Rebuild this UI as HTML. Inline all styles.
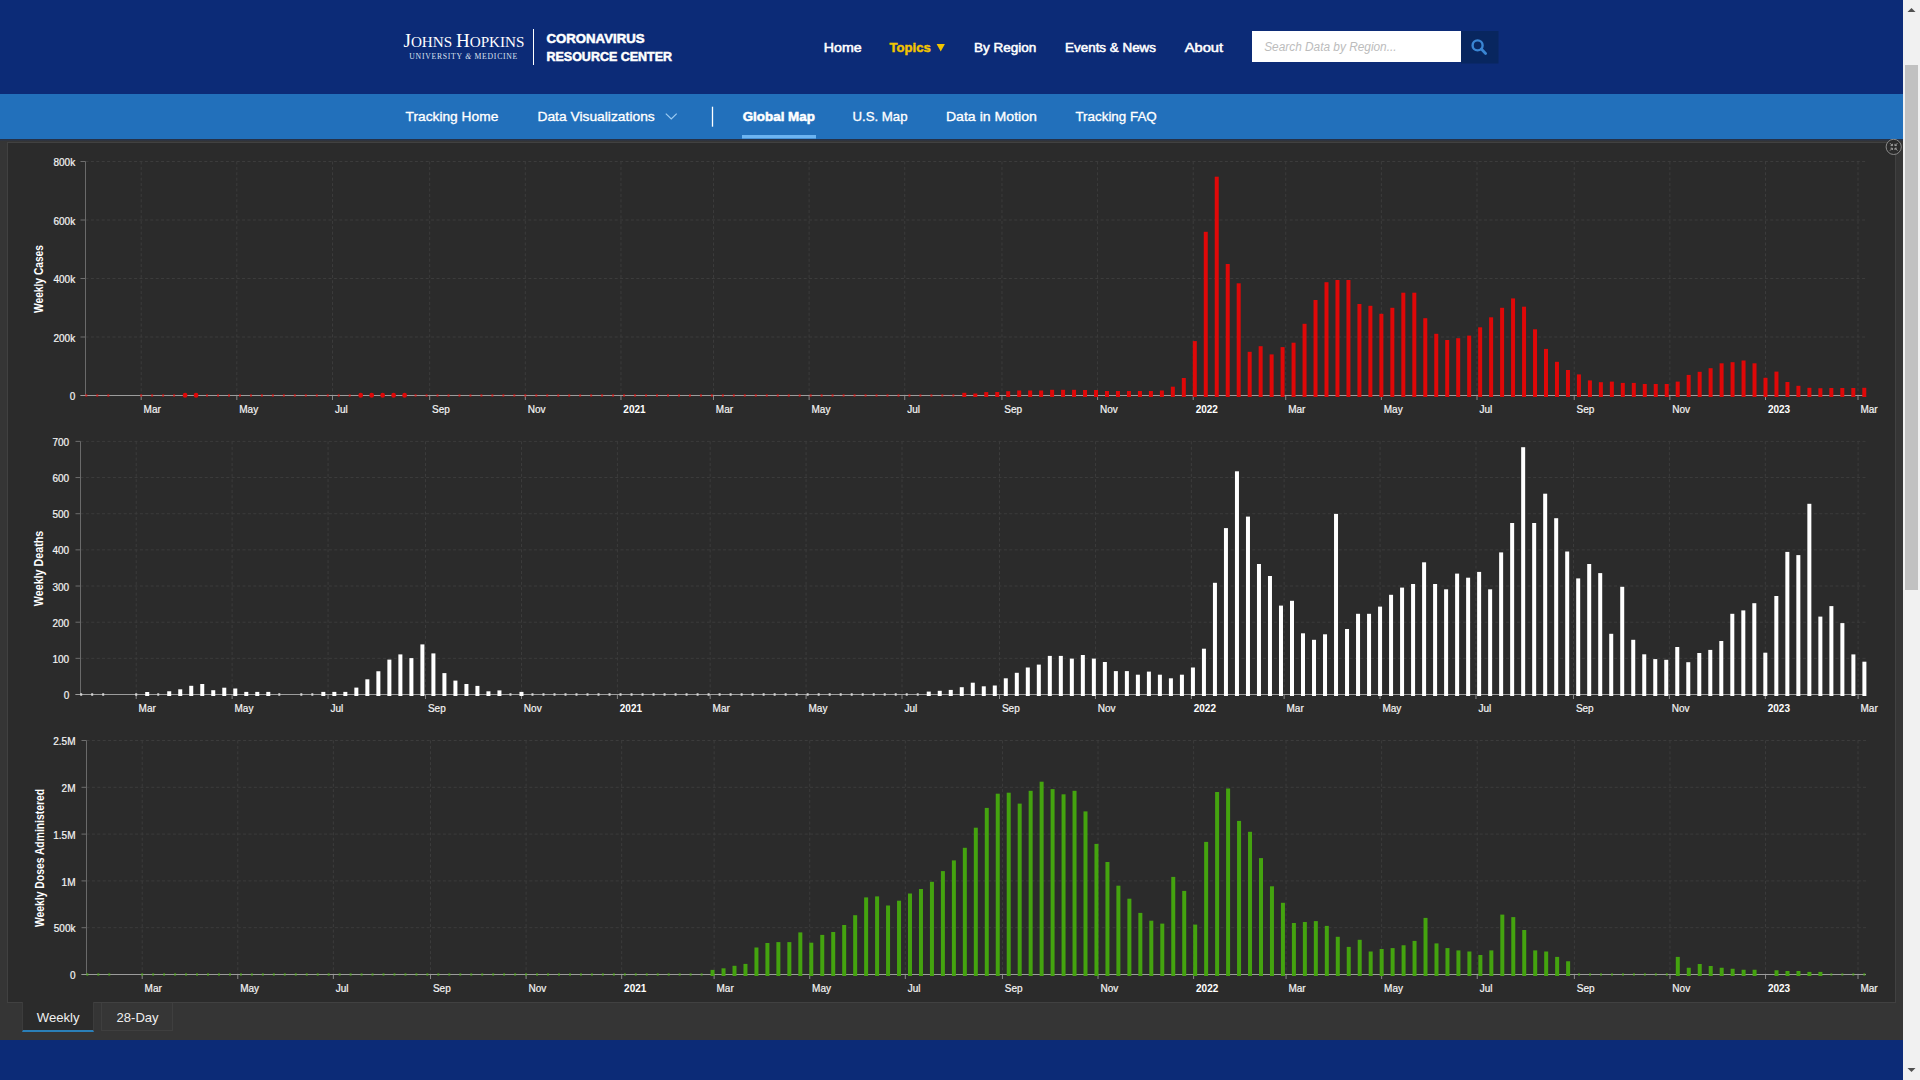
<!DOCTYPE html>
<html><head><meta charset="utf-8"><title>Johns Hopkins Coronavirus Resource Center</title>
<style>
html,body{margin:0;padding:0;width:1920px;height:1080px;overflow:hidden;background:#353535;font-family:"Liberation Sans",sans-serif;}
.blk{position:absolute;}
#hdr{left:0;top:0;width:1903px;height:94px;background:#0c2b77;}
#nav{left:0;top:94px;width:1903px;height:45px;background:#2270bb;}
#shadow{left:0;top:139px;width:1903px;height:2px;background:linear-gradient(#20304d,#34363b);}
#main{left:0;top:141px;width:1903px;height:899px;background:#353535;}
#panel{left:7px;top:142px;width:1887px;height:859px;background:#2b2b2b;border:1px solid #414141;}
#foot{left:0;top:1040px;width:1903px;height:40px;background:#0c2b77;}
#sb{left:1903px;top:0;width:17px;height:1080px;background:#f1f1f1;}
#thumb{left:1905px;top:65px;width:13px;height:525px;background:#c1c1c1;}
#tab1{left:22px;top:1002px;width:70px;height:28px;background:#2b2b2b;border-left:1px solid #3c3c3c;border-right:1px solid #3c3c3c;border-bottom:2px solid #2a7fb8;}
#tab2{left:101px;top:1003px;width:70px;height:27px;background:#363636;border:1px solid #3f3f3f;border-top:none;}
svg{position:absolute;left:0;top:0;}
.grid{stroke:#3c3c3c;stroke-width:1;stroke-dasharray:3 2.4;}
.tick{stroke:#6e6e6e;stroke-width:1;}
.xtick{stroke:#8a8a8a;stroke-width:1;}
.yaxis{stroke:#6a6a6a;stroke-width:1;}
.xaxis{stroke:#9c9c9c;stroke-width:1;}
.yl{font-family:"Liberation Sans",sans-serif;font-size:10px;fill:#f4f4f4;stroke:#f4f4f4;stroke-width:0.2;text-anchor:end;}
.xl{font-family:"Liberation Sans",sans-serif;font-size:10px;fill:#f4f4f4;stroke:#f4f4f4;stroke-width:0.2;}
.xlb{font-family:"Liberation Sans",sans-serif;font-size:10px;font-weight:bold;fill:#ffffff;}
.ttl{font-family:"Liberation Sans",sans-serif;font-size:12px;font-weight:bold;fill:#ffffff;text-anchor:middle;}
.nv{font-family:"Liberation Sans",sans-serif;font-size:12.5px;font-weight:bold;fill:#ffffff;}
.nvm{font-family:"Liberation Sans",sans-serif;font-size:12.5px;fill:#ffffff;stroke:#ffffff;stroke-width:0.5;}
.nv2{font-family:"Liberation Sans",sans-serif;font-size:12.5px;fill:#ffffff;stroke:#ffffff;stroke-width:0.3;}
</style></head>
<body>
<div class="blk" id="hdr"></div>
<div class="blk" id="nav"></div>
<div class="blk" id="shadow"></div>
<div class="blk" id="main"></div>
<div class="blk" id="panel"></div>
<div class="blk" id="foot"></div>
<div class="blk" id="tab1"></div>
<div class="blk" id="tab2"></div>
<div class="blk" id="sb"></div>
<div class="blk" id="thumb"></div>
<svg width="1920" height="1080" viewBox="0 0 1920 1080">
<!-- logo -->
<text x="403.5" y="47" font-family="Liberation Serif" fill="#ffffff" textLength="121" lengthAdjust="spacingAndGlyphs"><tspan font-size="19.5">J</tspan><tspan font-size="15.5">OHNS </tspan><tspan font-size="19.5">H</tspan><tspan font-size="15.5">OPKINS</tspan></text>
<text x="409.3" y="59.4" font-family="Liberation Serif" font-size="7.7" fill="#dfe5f2" textLength="108" lengthAdjust="spacing">UNIVERSITY <tspan font-style="italic">&amp;</tspan> MEDICINE</text>
<line x1="533.5" y1="29" x2="533.5" y2="65" stroke="#ffffff" stroke-width="1"/>
<text x="546.5" y="43.3" font-family="Liberation Sans" font-weight="bold" font-size="12" fill="#fff" stroke="#fff" stroke-width="0.5" textLength="98" lengthAdjust="spacingAndGlyphs">CORONAVIRUS</text>
<text x="546.5" y="61.3" font-family="Liberation Sans" font-weight="bold" font-size="12" fill="#fff" stroke="#fff" stroke-width="0.5" textLength="125.5" lengthAdjust="spacingAndGlyphs">RESOURCE CENTER</text>
<!-- top nav -->
<text x="823.8" y="51.9" class="nvm" textLength="37.8" lengthAdjust="spacingAndGlyphs">Home</text>
<text x="889.6" y="51.9" class="nv" style="fill:#f1c400;stroke:#f1c400;stroke-width:0.45" textLength="41.2" lengthAdjust="spacingAndGlyphs">Topics</text>
<path d="M936.6 44 L944.9 44 L940.75 51.4 Z" fill="#f1c400"/>
<text x="974" y="51.9" class="nvm" textLength="62.4" lengthAdjust="spacingAndGlyphs">By Region</text>
<text x="1065.1" y="51.9" class="nvm" textLength="90.9" lengthAdjust="spacingAndGlyphs">Events &amp; News</text>
<text x="1184.7" y="51.9" class="nvm" textLength="38.4" lengthAdjust="spacingAndGlyphs">About</text>
<!-- search -->
<rect x="1252" y="31" width="209" height="31" fill="#ffffff"/>
<rect x="1461" y="31" width="37.5" height="32.5" fill="#08265f"/>
<text x="1264.2" y="51" font-family="Liberation Sans" font-style="italic" font-size="12" fill="#bcbcbc" textLength="132.4" lengthAdjust="spacingAndGlyphs">Search Data by Region...</text>
<circle cx="1477.6" cy="45.4" r="5" fill="none" stroke="#3a86d4" stroke-width="2.4"/>
<line x1="1481.3" y1="49.1" x2="1485.6" y2="53.4" stroke="#3a86d4" stroke-width="2.8" stroke-linecap="round"/>
<!-- second nav -->
<text x="405.5" y="120.7" class="nv2" textLength="92.8" lengthAdjust="spacingAndGlyphs">Tracking Home</text>
<text x="537.4" y="120.7" class="nv2" textLength="117.4" lengthAdjust="spacingAndGlyphs">Data Visualizations</text>
<path d="M665.8 113.6 L671.25 119 L676.7 113.6" fill="none" stroke="#9ccbf2" stroke-width="1.2"/>
<line x1="712.5" y1="106.7" x2="712.5" y2="126.7" stroke="#ffffff" stroke-width="1.3"/>
<text x="742.7" y="120.7" class="nv" style="stroke:#fff;stroke-width:0.5" textLength="72.2" lengthAdjust="spacingAndGlyphs">Global Map</text>
<rect x="742" y="135" width="74" height="3.5" fill="#6cb4f2"/>
<text x="852.4" y="120.7" class="nv2" textLength="55.2" lengthAdjust="spacingAndGlyphs">U.S. Map</text>
<text x="945.9" y="120.7" class="nv2" textLength="91.1" lengthAdjust="spacingAndGlyphs">Data in Motion</text>
<text x="1075.4" y="120.7" class="nv2" textLength="81.4" lengthAdjust="spacingAndGlyphs">Tracking FAQ</text>
<!-- charts -->
<line x1="80.5" y1="395.5" x2="85.5" y2="395.5" class="tick"/>
<text x="75.2" y="400.1" class="yl">0</text>
<line x1="85.5" y1="337" x2="1866" y2="337" class="grid"/>
<line x1="80.5" y1="337" x2="85.5" y2="337" class="tick"/>
<text x="75.2" y="341.6" class="yl">200k</text>
<line x1="85.5" y1="278.5" x2="1866" y2="278.5" class="grid"/>
<line x1="80.5" y1="278.5" x2="85.5" y2="278.5" class="tick"/>
<text x="75.2" y="283.1" class="yl">400k</text>
<line x1="85.5" y1="220" x2="1866" y2="220" class="grid"/>
<line x1="80.5" y1="220" x2="85.5" y2="220" class="tick"/>
<text x="75.2" y="224.6" class="yl">600k</text>
<line x1="85.5" y1="161.5" x2="1866" y2="161.5" class="grid"/>
<line x1="80.5" y1="161.5" x2="85.5" y2="161.5" class="tick"/>
<text x="75.2" y="166.1" class="yl">800k</text>
<line x1="141.2" y1="161.5" x2="141.2" y2="395.5" class="grid"/>
<line x1="141.2" y1="395.5" x2="141.2" y2="400" class="xtick"/>
<text x="143.6" y="413.1" class="xl">Mar</text>
<line x1="236.84" y1="161.5" x2="236.84" y2="395.5" class="grid"/>
<line x1="236.84" y1="395.5" x2="236.84" y2="400" class="xtick"/>
<text x="239.24" y="413.1" class="xl">May</text>
<line x1="332.48" y1="161.5" x2="332.48" y2="395.5" class="grid"/>
<line x1="332.48" y1="395.5" x2="332.48" y2="400" class="xtick"/>
<text x="334.88" y="413.1" class="xl">Jul</text>
<line x1="429.69" y1="161.5" x2="429.69" y2="395.5" class="grid"/>
<line x1="429.69" y1="395.5" x2="429.69" y2="400" class="xtick"/>
<text x="432.09" y="413.1" class="xl">Sep</text>
<line x1="525.32" y1="161.5" x2="525.32" y2="395.5" class="grid"/>
<line x1="525.32" y1="395.5" x2="525.32" y2="400" class="xtick"/>
<text x="527.72" y="413.1" class="xl">Nov</text>
<line x1="620.96" y1="161.5" x2="620.96" y2="395.5" class="grid"/>
<line x1="620.96" y1="395.5" x2="620.96" y2="400" class="xtick"/>
<text x="623.36" y="413.1" class="xlb">2021</text>
<line x1="713.47" y1="161.5" x2="713.47" y2="395.5" class="grid"/>
<line x1="713.47" y1="395.5" x2="713.47" y2="400" class="xtick"/>
<text x="715.87" y="413.1" class="xl">Mar</text>
<line x1="809.11" y1="161.5" x2="809.11" y2="395.5" class="grid"/>
<line x1="809.11" y1="395.5" x2="809.11" y2="400" class="xtick"/>
<text x="811.51" y="413.1" class="xl">May</text>
<line x1="904.74" y1="161.5" x2="904.74" y2="395.5" class="grid"/>
<line x1="904.74" y1="395.5" x2="904.74" y2="400" class="xtick"/>
<text x="907.14" y="413.1" class="xl">Jul</text>
<line x1="1001.95" y1="161.5" x2="1001.95" y2="395.5" class="grid"/>
<line x1="1001.95" y1="395.5" x2="1001.95" y2="400" class="xtick"/>
<text x="1004.35" y="413.1" class="xl">Sep</text>
<line x1="1097.59" y1="161.5" x2="1097.59" y2="395.5" class="grid"/>
<line x1="1097.59" y1="395.5" x2="1097.59" y2="400" class="xtick"/>
<text x="1099.99" y="413.1" class="xl">Nov</text>
<line x1="1193.23" y1="161.5" x2="1193.23" y2="395.5" class="grid"/>
<line x1="1193.23" y1="395.5" x2="1193.23" y2="400" class="xtick"/>
<text x="1195.63" y="413.1" class="xlb">2022</text>
<line x1="1285.73" y1="161.5" x2="1285.73" y2="395.5" class="grid"/>
<line x1="1285.73" y1="395.5" x2="1285.73" y2="400" class="xtick"/>
<text x="1288.13" y="413.1" class="xl">Mar</text>
<line x1="1381.37" y1="161.5" x2="1381.37" y2="395.5" class="grid"/>
<line x1="1381.37" y1="395.5" x2="1381.37" y2="400" class="xtick"/>
<text x="1383.77" y="413.1" class="xl">May</text>
<line x1="1477.01" y1="161.5" x2="1477.01" y2="395.5" class="grid"/>
<line x1="1477.01" y1="395.5" x2="1477.01" y2="400" class="xtick"/>
<text x="1479.41" y="413.1" class="xl">Jul</text>
<line x1="1574.22" y1="161.5" x2="1574.22" y2="395.5" class="grid"/>
<line x1="1574.22" y1="395.5" x2="1574.22" y2="400" class="xtick"/>
<text x="1576.62" y="413.1" class="xl">Sep</text>
<line x1="1669.86" y1="161.5" x2="1669.86" y2="395.5" class="grid"/>
<line x1="1669.86" y1="395.5" x2="1669.86" y2="400" class="xtick"/>
<text x="1672.26" y="413.1" class="xl">Nov</text>
<line x1="1765.5" y1="161.5" x2="1765.5" y2="395.5" class="grid"/>
<line x1="1765.5" y1="395.5" x2="1765.5" y2="400" class="xtick"/>
<text x="1767.9" y="413.1" class="xlb">2023</text>
<line x1="1858" y1="161.5" x2="1858" y2="395.5" class="grid"/>
<line x1="1858" y1="395.5" x2="1858" y2="400" class="xtick"/>
<text x="1860.4" y="413.1" class="xl">Mar</text>
<line x1="85.5" y1="161.5" x2="85.5" y2="395.5" class="yaxis"/>
<line x1="80.5" y1="395.5" x2="1866" y2="395.5" class="xaxis"/>
<text transform="translate(42.7 279) rotate(-90)" class="ttl" textLength="68" lengthAdjust="spacingAndGlyphs">Weekly Cases</text>
<rect x="85.33" y="394" width="2" height="3" fill="#e00808" opacity="0.6"/>
<rect x="96.3" y="394" width="2" height="3" fill="#e00808" opacity="0.6"/>
<rect x="107.28" y="394" width="2" height="3" fill="#e00808" opacity="0.6"/>
<rect x="140.2" y="394" width="2" height="3" fill="#e00808" opacity="0.6"/>
<rect x="151.17" y="394" width="2" height="3" fill="#e00808" opacity="0.6"/>
<rect x="162.15" y="394" width="2" height="3" fill="#e00808" opacity="0.6"/>
<rect x="173.12" y="394" width="2" height="3" fill="#e00808" opacity="0.6"/>
<rect x="182.8" y="392.8" width="4.6" height="5" rx="2.3" fill="#e00808"/>
<rect x="193.77" y="392.8" width="4.6" height="5" rx="2.3" fill="#e00808"/>
<rect x="206.05" y="394" width="2" height="3" fill="#e00808" opacity="0.6"/>
<rect x="217.02" y="394" width="2" height="3" fill="#e00808" opacity="0.6"/>
<rect x="228" y="394" width="2" height="3" fill="#e00808" opacity="0.6"/>
<rect x="238.97" y="394" width="2" height="3" fill="#e00808" opacity="0.6"/>
<rect x="249.95" y="394" width="2" height="3" fill="#e00808" opacity="0.6"/>
<rect x="260.92" y="394" width="2" height="3" fill="#e00808" opacity="0.6"/>
<rect x="271.9" y="394" width="2" height="3" fill="#e00808" opacity="0.6"/>
<rect x="282.87" y="394" width="2" height="3" fill="#e00808" opacity="0.6"/>
<rect x="293.85" y="394" width="2" height="3" fill="#e00808" opacity="0.6"/>
<rect x="304.82" y="394" width="2" height="3" fill="#e00808" opacity="0.6"/>
<rect x="315.8" y="394" width="2" height="3" fill="#e00808" opacity="0.6"/>
<rect x="326.77" y="394" width="2" height="3" fill="#e00808" opacity="0.6"/>
<rect x="337.75" y="394" width="2" height="3" fill="#e00808" opacity="0.6"/>
<rect x="348.72" y="394" width="2" height="3" fill="#e00808" opacity="0.6"/>
<rect x="358.4" y="392.8" width="4.6" height="5" rx="2.3" fill="#e00808"/>
<rect x="369.37" y="392.8" width="4.6" height="5" rx="2.3" fill="#e00808"/>
<rect x="380.35" y="392.8" width="4.6" height="5" rx="2.3" fill="#e00808"/>
<rect x="391.32" y="392.8" width="4.6" height="5" rx="2.3" fill="#e00808"/>
<rect x="402.3" y="392.8" width="4.6" height="5" rx="2.3" fill="#e00808"/>
<rect x="414.57" y="394" width="2" height="3" fill="#e00808" opacity="0.6"/>
<rect x="425.55" y="394" width="2" height="3" fill="#e00808" opacity="0.6"/>
<rect x="436.52" y="394" width="2" height="3" fill="#e00808" opacity="0.6"/>
<rect x="447.5" y="394" width="2" height="3" fill="#e00808" opacity="0.6"/>
<rect x="458.47" y="394" width="2" height="3" fill="#e00808" opacity="0.6"/>
<rect x="469.45" y="394" width="2" height="3" fill="#e00808" opacity="0.6"/>
<rect x="480.42" y="394" width="2" height="3" fill="#e00808" opacity="0.6"/>
<rect x="491.4" y="394" width="2" height="3" fill="#e00808" opacity="0.6"/>
<rect x="502.37" y="394" width="2" height="3" fill="#e00808" opacity="0.6"/>
<rect x="513.35" y="394" width="2" height="3" fill="#e00808" opacity="0.6"/>
<rect x="524.32" y="394" width="2" height="3" fill="#e00808" opacity="0.6"/>
<rect x="535.3" y="394" width="2" height="3" fill="#e00808" opacity="0.6"/>
<rect x="546.27" y="394" width="2" height="3" fill="#e00808" opacity="0.6"/>
<rect x="557.25" y="394" width="2" height="3" fill="#e00808" opacity="0.6"/>
<rect x="568.22" y="394" width="2" height="3" fill="#e00808" opacity="0.6"/>
<rect x="579.2" y="394" width="2" height="3" fill="#e00808" opacity="0.6"/>
<rect x="590.17" y="394" width="2" height="3" fill="#e00808" opacity="0.6"/>
<rect x="601.15" y="394" width="2" height="3" fill="#e00808" opacity="0.6"/>
<rect x="612.12" y="394" width="2" height="3" fill="#e00808" opacity="0.6"/>
<rect x="623.1" y="394" width="2" height="3" fill="#e00808" opacity="0.6"/>
<rect x="634.07" y="394" width="2" height="3" fill="#e00808" opacity="0.6"/>
<rect x="645.05" y="394" width="2" height="3" fill="#e00808" opacity="0.6"/>
<rect x="656.02" y="394" width="2" height="3" fill="#e00808" opacity="0.6"/>
<rect x="667" y="394" width="2" height="3" fill="#e00808" opacity="0.6"/>
<rect x="677.97" y="394" width="2" height="3" fill="#e00808" opacity="0.6"/>
<rect x="688.95" y="394" width="2" height="3" fill="#e00808" opacity="0.6"/>
<rect x="699.92" y="394" width="2" height="3" fill="#e00808" opacity="0.6"/>
<rect x="710.9" y="394" width="2" height="3" fill="#e00808" opacity="0.6"/>
<rect x="721.87" y="394" width="2" height="3" fill="#e00808" opacity="0.6"/>
<rect x="732.85" y="394" width="2" height="3" fill="#e00808" opacity="0.6"/>
<rect x="743.82" y="394" width="2" height="3" fill="#e00808" opacity="0.6"/>
<rect x="754.8" y="394" width="2" height="3" fill="#e00808" opacity="0.6"/>
<rect x="765.77" y="394" width="2" height="3" fill="#e00808" opacity="0.6"/>
<rect x="776.75" y="394" width="2" height="3" fill="#e00808" opacity="0.6"/>
<rect x="787.72" y="394" width="2" height="3" fill="#e00808" opacity="0.6"/>
<rect x="798.7" y="394" width="2" height="3" fill="#e00808" opacity="0.6"/>
<rect x="809.67" y="394" width="2" height="3" fill="#e00808" opacity="0.6"/>
<rect x="820.65" y="394" width="2" height="3" fill="#e00808" opacity="0.6"/>
<rect x="831.62" y="394" width="2" height="3" fill="#e00808" opacity="0.6"/>
<rect x="842.6" y="394" width="2" height="3" fill="#e00808" opacity="0.6"/>
<rect x="853.57" y="394" width="2" height="3" fill="#e00808" opacity="0.6"/>
<rect x="864.55" y="394" width="2" height="3" fill="#e00808" opacity="0.6"/>
<rect x="875.52" y="394" width="2" height="3" fill="#e00808" opacity="0.6"/>
<rect x="886.5" y="394" width="2" height="3" fill="#e00808" opacity="0.6"/>
<rect x="897.47" y="394" width="2" height="3" fill="#e00808" opacity="0.6"/>
<rect x="908.45" y="394" width="2" height="3" fill="#e00808" opacity="0.6"/>
<rect x="919.42" y="394" width="2" height="3" fill="#e00808" opacity="0.6"/>
<rect x="930.4" y="394" width="2" height="3" fill="#e00808" opacity="0.6"/>
<rect x="941.37" y="394" width="2" height="3" fill="#e00808" opacity="0.6"/>
<rect x="952.35" y="394" width="2" height="3" fill="#e00808" opacity="0.6"/>
<rect x="962.32" y="392.8" width="4" height="4.2" fill="#e00808"/>
<rect x="973.3" y="393.5" width="4" height="3.5" fill="#e00808"/>
<rect x="984.27" y="392.1" width="4" height="4.9" fill="#e00808"/>
<rect x="995.25" y="392" width="4" height="5" fill="#e00808"/>
<rect x="1006.22" y="391.2" width="4" height="5.8" fill="#e00808"/>
<rect x="1017.2" y="390.5" width="4" height="6.5" fill="#e00808"/>
<rect x="1028.17" y="390.5" width="4" height="6.5" fill="#e00808"/>
<rect x="1039.15" y="390.5" width="4" height="6.5" fill="#e00808"/>
<rect x="1050.12" y="389.8" width="4" height="7.2" fill="#e00808"/>
<rect x="1061.1" y="389.8" width="4" height="7.2" fill="#e00808"/>
<rect x="1072.07" y="389.8" width="4" height="7.2" fill="#e00808"/>
<rect x="1083.05" y="390" width="4" height="7" fill="#e00808"/>
<rect x="1094.02" y="390" width="4" height="7" fill="#e00808"/>
<rect x="1105" y="391" width="4" height="6" fill="#e00808"/>
<rect x="1115.97" y="391" width="4" height="6" fill="#e00808"/>
<rect x="1126.95" y="391" width="4" height="6" fill="#e00808"/>
<rect x="1137.92" y="391" width="4" height="6" fill="#e00808"/>
<rect x="1148.9" y="391" width="4" height="6" fill="#e00808"/>
<rect x="1159.87" y="390.5" width="4" height="6.5" fill="#e00808"/>
<rect x="1170.85" y="386.7" width="4" height="10.3" fill="#e00808"/>
<rect x="1181.82" y="378" width="4" height="19" fill="#e00808"/>
<rect x="1192.8" y="341.1" width="4" height="55.9" fill="#e00808"/>
<rect x="1203.77" y="231.8" width="4" height="165.2" fill="#e00808"/>
<rect x="1214.75" y="176.7" width="4" height="220.3" fill="#e00808"/>
<rect x="1225.72" y="264" width="4" height="133" fill="#e00808"/>
<rect x="1236.7" y="283.3" width="4" height="113.7" fill="#e00808"/>
<rect x="1247.67" y="351.8" width="4" height="45.2" fill="#e00808"/>
<rect x="1258.65" y="346.2" width="4" height="50.8" fill="#e00808"/>
<rect x="1269.62" y="354.4" width="4" height="42.6" fill="#e00808"/>
<rect x="1280.6" y="347.1" width="4" height="49.9" fill="#e00808"/>
<rect x="1291.57" y="342.7" width="4" height="54.3" fill="#e00808"/>
<rect x="1302.55" y="323.8" width="4" height="73.2" fill="#e00808"/>
<rect x="1313.52" y="300" width="4" height="97" fill="#e00808"/>
<rect x="1324.5" y="282.2" width="4" height="114.8" fill="#e00808"/>
<rect x="1335.47" y="280" width="4" height="117" fill="#e00808"/>
<rect x="1346.45" y="280" width="4" height="117" fill="#e00808"/>
<rect x="1357.42" y="304" width="4" height="93" fill="#e00808"/>
<rect x="1368.4" y="305.8" width="4" height="91.2" fill="#e00808"/>
<rect x="1379.37" y="313.8" width="4" height="83.2" fill="#e00808"/>
<rect x="1390.35" y="307.8" width="4" height="89.2" fill="#e00808"/>
<rect x="1401.32" y="292.7" width="4" height="104.3" fill="#e00808"/>
<rect x="1412.3" y="292.7" width="4" height="104.3" fill="#e00808"/>
<rect x="1423.27" y="318.2" width="4" height="78.8" fill="#e00808"/>
<rect x="1434.25" y="333.8" width="4" height="63.2" fill="#e00808"/>
<rect x="1445.22" y="340" width="4" height="57" fill="#e00808"/>
<rect x="1456.2" y="338.2" width="4" height="58.8" fill="#e00808"/>
<rect x="1467.17" y="335.6" width="4" height="61.4" fill="#e00808"/>
<rect x="1478.15" y="327.3" width="4" height="69.7" fill="#e00808"/>
<rect x="1489.12" y="317.3" width="4" height="79.7" fill="#e00808"/>
<rect x="1500.1" y="307.8" width="4" height="89.2" fill="#e00808"/>
<rect x="1511.07" y="298.4" width="4" height="98.6" fill="#e00808"/>
<rect x="1522.05" y="306.7" width="4" height="90.3" fill="#e00808"/>
<rect x="1533.02" y="329.3" width="4" height="67.7" fill="#e00808"/>
<rect x="1544" y="348.9" width="4" height="48.1" fill="#e00808"/>
<rect x="1554.97" y="361.8" width="4" height="35.2" fill="#e00808"/>
<rect x="1565.95" y="370" width="4" height="27" fill="#e00808"/>
<rect x="1576.92" y="374.4" width="4" height="22.6" fill="#e00808"/>
<rect x="1587.9" y="380.4" width="4" height="16.6" fill="#e00808"/>
<rect x="1598.87" y="382.2" width="4" height="14.8" fill="#e00808"/>
<rect x="1609.85" y="381.6" width="4" height="15.4" fill="#e00808"/>
<rect x="1620.82" y="382.9" width="4" height="14.1" fill="#e00808"/>
<rect x="1631.8" y="382.9" width="4" height="14.1" fill="#e00808"/>
<rect x="1642.77" y="384" width="4" height="13" fill="#e00808"/>
<rect x="1653.75" y="384" width="4" height="13" fill="#e00808"/>
<rect x="1664.72" y="384" width="4" height="13" fill="#e00808"/>
<rect x="1675.7" y="381.6" width="4" height="15.4" fill="#e00808"/>
<rect x="1686.67" y="374.9" width="4" height="22.1" fill="#e00808"/>
<rect x="1697.65" y="371.8" width="4" height="25.2" fill="#e00808"/>
<rect x="1708.62" y="368.2" width="4" height="28.8" fill="#e00808"/>
<rect x="1719.6" y="363.3" width="4" height="33.7" fill="#e00808"/>
<rect x="1730.57" y="362.2" width="4" height="34.8" fill="#e00808"/>
<rect x="1741.55" y="360.5" width="4" height="36.5" fill="#e00808"/>
<rect x="1752.52" y="363.3" width="4" height="33.7" fill="#e00808"/>
<rect x="1763.5" y="377.8" width="4" height="19.2" fill="#e00808"/>
<rect x="1774.47" y="371.6" width="4" height="25.4" fill="#e00808"/>
<rect x="1785.45" y="382" width="4" height="15" fill="#e00808"/>
<rect x="1796.42" y="385.8" width="4" height="11.2" fill="#e00808"/>
<rect x="1807.4" y="387.8" width="4" height="9.2" fill="#e00808"/>
<rect x="1818.37" y="388.2" width="4" height="8.8" fill="#e00808"/>
<rect x="1829.35" y="388" width="4" height="9" fill="#e00808"/>
<rect x="1840.32" y="388" width="4" height="9" fill="#e00808"/>
<rect x="1851.3" y="388" width="4" height="9" fill="#e00808"/>
<rect x="1862.27" y="387.8" width="4" height="9.2" fill="#e00808"/>
<line x1="75.5" y1="694.5" x2="80.5" y2="694.5" class="tick"/>
<text x="69.2" y="699.1" class="yl">0</text>
<line x1="80.5" y1="658.34" x2="1866" y2="658.34" class="grid"/>
<line x1="75.5" y1="658.34" x2="80.5" y2="658.34" class="tick"/>
<text x="69.2" y="662.94" class="yl">100</text>
<line x1="80.5" y1="622.19" x2="1866" y2="622.19" class="grid"/>
<line x1="75.5" y1="622.19" x2="80.5" y2="622.19" class="tick"/>
<text x="69.2" y="626.79" class="yl">200</text>
<line x1="80.5" y1="586.03" x2="1866" y2="586.03" class="grid"/>
<line x1="75.5" y1="586.03" x2="80.5" y2="586.03" class="tick"/>
<text x="69.2" y="590.63" class="yl">300</text>
<line x1="80.5" y1="549.87" x2="1866" y2="549.87" class="grid"/>
<line x1="75.5" y1="549.87" x2="80.5" y2="549.87" class="tick"/>
<text x="69.2" y="554.47" class="yl">400</text>
<line x1="80.5" y1="513.71" x2="1866" y2="513.71" class="grid"/>
<line x1="75.5" y1="513.71" x2="80.5" y2="513.71" class="tick"/>
<text x="69.2" y="518.31" class="yl">500</text>
<line x1="80.5" y1="477.56" x2="1866" y2="477.56" class="grid"/>
<line x1="75.5" y1="477.56" x2="80.5" y2="477.56" class="tick"/>
<text x="69.2" y="482.16" class="yl">600</text>
<line x1="80.5" y1="441.4" x2="1866" y2="441.4" class="grid"/>
<line x1="75.5" y1="441.4" x2="80.5" y2="441.4" class="tick"/>
<text x="69.2" y="446" class="yl">700</text>
<line x1="136.2" y1="441.4" x2="136.2" y2="694.5" class="grid"/>
<line x1="136.2" y1="694.5" x2="136.2" y2="699" class="xtick"/>
<text x="138.6" y="712.1" class="xl">Mar</text>
<line x1="232.12" y1="441.4" x2="232.12" y2="694.5" class="grid"/>
<line x1="232.12" y1="694.5" x2="232.12" y2="699" class="xtick"/>
<text x="234.52" y="712.1" class="xl">May</text>
<line x1="328.05" y1="441.4" x2="328.05" y2="694.5" class="grid"/>
<line x1="328.05" y1="694.5" x2="328.05" y2="699" class="xtick"/>
<text x="330.45" y="712.1" class="xl">Jul</text>
<line x1="425.54" y1="441.4" x2="425.54" y2="694.5" class="grid"/>
<line x1="425.54" y1="694.5" x2="425.54" y2="699" class="xtick"/>
<text x="427.94" y="712.1" class="xl">Sep</text>
<line x1="521.47" y1="441.4" x2="521.47" y2="694.5" class="grid"/>
<line x1="521.47" y1="694.5" x2="521.47" y2="699" class="xtick"/>
<text x="523.87" y="712.1" class="xl">Nov</text>
<line x1="617.39" y1="441.4" x2="617.39" y2="694.5" class="grid"/>
<line x1="617.39" y1="694.5" x2="617.39" y2="699" class="xtick"/>
<text x="619.79" y="712.1" class="xlb">2021</text>
<line x1="710.17" y1="441.4" x2="710.17" y2="694.5" class="grid"/>
<line x1="710.17" y1="694.5" x2="710.17" y2="699" class="xtick"/>
<text x="712.57" y="712.1" class="xl">Mar</text>
<line x1="806.09" y1="441.4" x2="806.09" y2="694.5" class="grid"/>
<line x1="806.09" y1="694.5" x2="806.09" y2="699" class="xtick"/>
<text x="808.49" y="712.1" class="xl">May</text>
<line x1="902.01" y1="441.4" x2="902.01" y2="694.5" class="grid"/>
<line x1="902.01" y1="694.5" x2="902.01" y2="699" class="xtick"/>
<text x="904.41" y="712.1" class="xl">Jul</text>
<line x1="999.51" y1="441.4" x2="999.51" y2="694.5" class="grid"/>
<line x1="999.51" y1="694.5" x2="999.51" y2="699" class="xtick"/>
<text x="1001.91" y="712.1" class="xl">Sep</text>
<line x1="1095.43" y1="441.4" x2="1095.43" y2="694.5" class="grid"/>
<line x1="1095.43" y1="694.5" x2="1095.43" y2="699" class="xtick"/>
<text x="1097.83" y="712.1" class="xl">Nov</text>
<line x1="1191.36" y1="441.4" x2="1191.36" y2="694.5" class="grid"/>
<line x1="1191.36" y1="694.5" x2="1191.36" y2="699" class="xtick"/>
<text x="1193.76" y="712.1" class="xlb">2022</text>
<line x1="1284.13" y1="441.4" x2="1284.13" y2="694.5" class="grid"/>
<line x1="1284.13" y1="694.5" x2="1284.13" y2="699" class="xtick"/>
<text x="1286.53" y="712.1" class="xl">Mar</text>
<line x1="1380.06" y1="441.4" x2="1380.06" y2="694.5" class="grid"/>
<line x1="1380.06" y1="694.5" x2="1380.06" y2="699" class="xtick"/>
<text x="1382.46" y="712.1" class="xl">May</text>
<line x1="1475.98" y1="441.4" x2="1475.98" y2="694.5" class="grid"/>
<line x1="1475.98" y1="694.5" x2="1475.98" y2="699" class="xtick"/>
<text x="1478.38" y="712.1" class="xl">Jul</text>
<line x1="1573.48" y1="441.4" x2="1573.48" y2="694.5" class="grid"/>
<line x1="1573.48" y1="694.5" x2="1573.48" y2="699" class="xtick"/>
<text x="1575.88" y="712.1" class="xl">Sep</text>
<line x1="1669.4" y1="441.4" x2="1669.4" y2="694.5" class="grid"/>
<line x1="1669.4" y1="694.5" x2="1669.4" y2="699" class="xtick"/>
<text x="1671.8" y="712.1" class="xl">Nov</text>
<line x1="1765.32" y1="441.4" x2="1765.32" y2="694.5" class="grid"/>
<line x1="1765.32" y1="694.5" x2="1765.32" y2="699" class="xtick"/>
<text x="1767.72" y="712.1" class="xlb">2023</text>
<line x1="1858.1" y1="441.4" x2="1858.1" y2="694.5" class="grid"/>
<line x1="1858.1" y1="694.5" x2="1858.1" y2="699" class="xtick"/>
<text x="1860.5" y="712.1" class="xl">Mar</text>
<line x1="80.5" y1="441.4" x2="80.5" y2="694.5" class="yaxis"/>
<line x1="75.5" y1="694.5" x2="1866" y2="694.5" class="xaxis"/>
<text transform="translate(42.7 568.45) rotate(-90)" class="ttl" textLength="75.5" lengthAdjust="spacingAndGlyphs">Weekly Deaths</text>
<rect x="80.16" y="693" width="2" height="3" fill="#ffffff" opacity="0.6"/>
<rect x="91.17" y="693" width="2" height="3" fill="#ffffff" opacity="0.6"/>
<rect x="102.18" y="693" width="2" height="3" fill="#ffffff" opacity="0.6"/>
<rect x="135.2" y="693" width="2" height="3" fill="#ffffff" opacity="0.6"/>
<rect x="145.21" y="692" width="4" height="4" fill="#ffffff"/>
<rect x="157.22" y="693" width="2" height="3" fill="#ffffff" opacity="0.6"/>
<rect x="167.22" y="691.25" width="4" height="4.75" fill="#ffffff"/>
<rect x="178.23" y="689.3" width="4" height="6.7" fill="#ffffff"/>
<rect x="189.24" y="685.8" width="4" height="10.2" fill="#ffffff"/>
<rect x="200.25" y="684" width="4" height="12" fill="#ffffff"/>
<rect x="211.25" y="690.2" width="4" height="5.8" fill="#ffffff"/>
<rect x="222.26" y="687.7" width="4" height="8.3" fill="#ffffff"/>
<rect x="233.27" y="688.5" width="4" height="7.5" fill="#ffffff"/>
<rect x="244.28" y="691.9" width="4" height="4.1" fill="#ffffff"/>
<rect x="255.28" y="691.9" width="4" height="4.1" fill="#ffffff"/>
<rect x="266.29" y="691.9" width="4" height="4.1" fill="#ffffff"/>
<rect x="278.3" y="693" width="2" height="3" fill="#ffffff" opacity="0.6"/>
<rect x="300.31" y="693" width="2" height="3" fill="#ffffff" opacity="0.6"/>
<rect x="311.32" y="693" width="2" height="3" fill="#ffffff" opacity="0.6"/>
<rect x="321.33" y="691.9" width="4" height="4.1" fill="#ffffff"/>
<rect x="332.34" y="691.9" width="4" height="4.1" fill="#ffffff"/>
<rect x="343.34" y="691.9" width="4" height="4.1" fill="#ffffff"/>
<rect x="354.35" y="687.6" width="4" height="8.4" fill="#ffffff"/>
<rect x="365.36" y="679.3" width="4" height="16.7" fill="#ffffff"/>
<rect x="376.37" y="671.25" width="4" height="24.75" fill="#ffffff"/>
<rect x="387.37" y="659.6" width="4" height="36.4" fill="#ffffff"/>
<rect x="398.38" y="654.4" width="4" height="41.6" fill="#ffffff"/>
<rect x="409.39" y="658.1" width="4" height="37.9" fill="#ffffff"/>
<rect x="420.4" y="644.4" width="4" height="51.6" fill="#ffffff"/>
<rect x="431.4" y="653.4" width="4" height="42.6" fill="#ffffff"/>
<rect x="442.41" y="673.1" width="4" height="22.9" fill="#ffffff"/>
<rect x="453.42" y="680.6" width="4" height="15.4" fill="#ffffff"/>
<rect x="464.43" y="684" width="4" height="12" fill="#ffffff"/>
<rect x="475.43" y="685.9" width="4" height="10.1" fill="#ffffff"/>
<rect x="486.44" y="691.3" width="4" height="4.7" fill="#ffffff"/>
<rect x="497.45" y="690.4" width="4" height="5.6" fill="#ffffff"/>
<rect x="509.46" y="693" width="2" height="3" fill="#ffffff" opacity="0.6"/>
<rect x="519.47" y="691.9" width="4" height="4.1" fill="#ffffff"/>
<rect x="531.47" y="693" width="2" height="3" fill="#ffffff" opacity="0.6"/>
<rect x="542.48" y="693" width="2" height="3" fill="#ffffff" opacity="0.6"/>
<rect x="553.49" y="693" width="2" height="3" fill="#ffffff" opacity="0.6"/>
<rect x="564.5" y="693" width="2" height="3" fill="#ffffff" opacity="0.6"/>
<rect x="575.5" y="693" width="2" height="3" fill="#ffffff" opacity="0.6"/>
<rect x="586.51" y="693" width="2" height="3" fill="#ffffff" opacity="0.6"/>
<rect x="597.52" y="693" width="2" height="3" fill="#ffffff" opacity="0.6"/>
<rect x="608.53" y="693" width="2" height="3" fill="#ffffff" opacity="0.6"/>
<rect x="619.53" y="693" width="2" height="3" fill="#ffffff" opacity="0.6"/>
<rect x="630.54" y="693" width="2" height="3" fill="#ffffff" opacity="0.6"/>
<rect x="641.55" y="693" width="2" height="3" fill="#ffffff" opacity="0.6"/>
<rect x="652.56" y="693" width="2" height="3" fill="#ffffff" opacity="0.6"/>
<rect x="663.56" y="693" width="2" height="3" fill="#ffffff" opacity="0.6"/>
<rect x="674.57" y="693" width="2" height="3" fill="#ffffff" opacity="0.6"/>
<rect x="685.58" y="693" width="2" height="3" fill="#ffffff" opacity="0.6"/>
<rect x="696.59" y="693" width="2" height="3" fill="#ffffff" opacity="0.6"/>
<rect x="707.59" y="693" width="2" height="3" fill="#ffffff" opacity="0.6"/>
<rect x="718.6" y="693" width="2" height="3" fill="#ffffff" opacity="0.6"/>
<rect x="729.61" y="693" width="2" height="3" fill="#ffffff" opacity="0.6"/>
<rect x="740.62" y="693" width="2" height="3" fill="#ffffff" opacity="0.6"/>
<rect x="751.62" y="693" width="2" height="3" fill="#ffffff" opacity="0.6"/>
<rect x="762.63" y="693" width="2" height="3" fill="#ffffff" opacity="0.6"/>
<rect x="773.64" y="693" width="2" height="3" fill="#ffffff" opacity="0.6"/>
<rect x="784.65" y="693" width="2" height="3" fill="#ffffff" opacity="0.6"/>
<rect x="795.65" y="693" width="2" height="3" fill="#ffffff" opacity="0.6"/>
<rect x="806.66" y="693" width="2" height="3" fill="#ffffff" opacity="0.6"/>
<rect x="817.67" y="693" width="2" height="3" fill="#ffffff" opacity="0.6"/>
<rect x="828.68" y="693" width="2" height="3" fill="#ffffff" opacity="0.6"/>
<rect x="839.69" y="693" width="2" height="3" fill="#ffffff" opacity="0.6"/>
<rect x="850.69" y="693" width="2" height="3" fill="#ffffff" opacity="0.6"/>
<rect x="861.7" y="693" width="2" height="3" fill="#ffffff" opacity="0.6"/>
<rect x="872.71" y="693" width="2" height="3" fill="#ffffff" opacity="0.6"/>
<rect x="883.72" y="693" width="2" height="3" fill="#ffffff" opacity="0.6"/>
<rect x="894.72" y="693" width="2" height="3" fill="#ffffff" opacity="0.6"/>
<rect x="905.73" y="693" width="2" height="3" fill="#ffffff" opacity="0.6"/>
<rect x="916.74" y="693" width="2" height="3" fill="#ffffff" opacity="0.6"/>
<rect x="926.75" y="691.6" width="4" height="4.4" fill="#ffffff"/>
<rect x="937.75" y="690.8" width="4" height="5.2" fill="#ffffff"/>
<rect x="948.76" y="689.9" width="4" height="6.1" fill="#ffffff"/>
<rect x="959.77" y="687.2" width="4" height="8.8" fill="#ffffff"/>
<rect x="970.78" y="682.7" width="4" height="13.3" fill="#ffffff"/>
<rect x="981.78" y="686.3" width="4" height="9.7" fill="#ffffff"/>
<rect x="992.79" y="685.5" width="4" height="10.5" fill="#ffffff"/>
<rect x="1003.8" y="678.3" width="4" height="17.7" fill="#ffffff"/>
<rect x="1014.81" y="672.8" width="4" height="23.2" fill="#ffffff"/>
<rect x="1025.81" y="667.5" width="4" height="28.5" fill="#ffffff"/>
<rect x="1036.82" y="664.6" width="4" height="31.4" fill="#ffffff"/>
<rect x="1047.83" y="655.9" width="4" height="40.1" fill="#ffffff"/>
<rect x="1058.84" y="655.9" width="4" height="40.1" fill="#ffffff"/>
<rect x="1069.84" y="658.6" width="4" height="37.4" fill="#ffffff"/>
<rect x="1080.85" y="655" width="4" height="41" fill="#ffffff"/>
<rect x="1091.86" y="658.6" width="4" height="37.4" fill="#ffffff"/>
<rect x="1102.87" y="662" width="4" height="34" fill="#ffffff"/>
<rect x="1113.87" y="671.1" width="4" height="24.9" fill="#ffffff"/>
<rect x="1124.88" y="671.1" width="4" height="24.9" fill="#ffffff"/>
<rect x="1135.89" y="674.7" width="4" height="21.3" fill="#ffffff"/>
<rect x="1146.9" y="671.6" width="4" height="24.4" fill="#ffffff"/>
<rect x="1157.9" y="674.7" width="4" height="21.3" fill="#ffffff"/>
<rect x="1168.91" y="678.3" width="4" height="17.7" fill="#ffffff"/>
<rect x="1179.92" y="674.7" width="4" height="21.3" fill="#ffffff"/>
<rect x="1190.93" y="667.5" width="4" height="28.5" fill="#ffffff"/>
<rect x="1201.94" y="648.7" width="4" height="47.3" fill="#ffffff"/>
<rect x="1212.94" y="582.8" width="4" height="113.2" fill="#ffffff"/>
<rect x="1223.95" y="528.1" width="4" height="167.9" fill="#ffffff"/>
<rect x="1234.96" y="471.3" width="4" height="224.7" fill="#ffffff"/>
<rect x="1245.97" y="516.6" width="4" height="179.4" fill="#ffffff"/>
<rect x="1256.97" y="564" width="4" height="132" fill="#ffffff"/>
<rect x="1267.98" y="576" width="4" height="120" fill="#ffffff"/>
<rect x="1278.99" y="605.6" width="4" height="90.4" fill="#ffffff"/>
<rect x="1290" y="600.8" width="4" height="95.2" fill="#ffffff"/>
<rect x="1301" y="633.3" width="4" height="62.7" fill="#ffffff"/>
<rect x="1312.01" y="639.8" width="4" height="56.2" fill="#ffffff"/>
<rect x="1323.02" y="634.3" width="4" height="61.7" fill="#ffffff"/>
<rect x="1334.03" y="513.9" width="4" height="182.1" fill="#ffffff"/>
<rect x="1345.03" y="629" width="4" height="67" fill="#ffffff"/>
<rect x="1356.04" y="613.8" width="4" height="82.2" fill="#ffffff"/>
<rect x="1367.05" y="613.8" width="4" height="82.2" fill="#ffffff"/>
<rect x="1378.06" y="606.6" width="4" height="89.4" fill="#ffffff"/>
<rect x="1389.06" y="594.8" width="4" height="101.2" fill="#ffffff"/>
<rect x="1400.07" y="587.6" width="4" height="108.4" fill="#ffffff"/>
<rect x="1411.08" y="584" width="4" height="112" fill="#ffffff"/>
<rect x="1422.09" y="562.3" width="4" height="133.7" fill="#ffffff"/>
<rect x="1433.09" y="584" width="4" height="112" fill="#ffffff"/>
<rect x="1444.1" y="589.3" width="4" height="106.7" fill="#ffffff"/>
<rect x="1455.11" y="573.6" width="4" height="122.4" fill="#ffffff"/>
<rect x="1466.12" y="577.7" width="4" height="118.3" fill="#ffffff"/>
<rect x="1477.12" y="571.9" width="4" height="124.1" fill="#ffffff"/>
<rect x="1488.13" y="589.3" width="4" height="106.7" fill="#ffffff"/>
<rect x="1499.14" y="552.4" width="4" height="143.6" fill="#ffffff"/>
<rect x="1510.15" y="523" width="4" height="173" fill="#ffffff"/>
<rect x="1521.16" y="447.2" width="4" height="248.8" fill="#ffffff"/>
<rect x="1532.16" y="523" width="4" height="173" fill="#ffffff"/>
<rect x="1543.17" y="493.7" width="4" height="202.3" fill="#ffffff"/>
<rect x="1554.18" y="518.2" width="4" height="177.8" fill="#ffffff"/>
<rect x="1565.19" y="551.5" width="4" height="144.5" fill="#ffffff"/>
<rect x="1576.19" y="578.4" width="4" height="117.6" fill="#ffffff"/>
<rect x="1587.2" y="564" width="4" height="132" fill="#ffffff"/>
<rect x="1598.21" y="573.1" width="4" height="122.9" fill="#ffffff"/>
<rect x="1609.22" y="633.8" width="4" height="62.2" fill="#ffffff"/>
<rect x="1620.22" y="586.8" width="4" height="109.2" fill="#ffffff"/>
<rect x="1631.23" y="639.8" width="4" height="56.2" fill="#ffffff"/>
<rect x="1642.24" y="654.3" width="4" height="41.7" fill="#ffffff"/>
<rect x="1653.25" y="659.1" width="4" height="36.9" fill="#ffffff"/>
<rect x="1664.25" y="659.8" width="4" height="36.2" fill="#ffffff"/>
<rect x="1675.26" y="647" width="4" height="49" fill="#ffffff"/>
<rect x="1686.27" y="662.2" width="4" height="33.8" fill="#ffffff"/>
<rect x="1697.28" y="653" width="4" height="43" fill="#ffffff"/>
<rect x="1708.28" y="649.9" width="4" height="46.1" fill="#ffffff"/>
<rect x="1719.29" y="641" width="4" height="55" fill="#ffffff"/>
<rect x="1730.3" y="613.8" width="4" height="82.2" fill="#ffffff"/>
<rect x="1741.31" y="610.4" width="4" height="85.6" fill="#ffffff"/>
<rect x="1752.31" y="603.2" width="4" height="92.8" fill="#ffffff"/>
<rect x="1763.32" y="652.7" width="4" height="43.3" fill="#ffffff"/>
<rect x="1774.33" y="596" width="4" height="100" fill="#ffffff"/>
<rect x="1785.34" y="551.9" width="4" height="144.1" fill="#ffffff"/>
<rect x="1796.34" y="555.1" width="4" height="140.9" fill="#ffffff"/>
<rect x="1807.35" y="503.8" width="4" height="192.2" fill="#ffffff"/>
<rect x="1818.36" y="616.6" width="4" height="79.4" fill="#ffffff"/>
<rect x="1829.37" y="606.1" width="4" height="89.9" fill="#ffffff"/>
<rect x="1840.37" y="623.1" width="4" height="72.9" fill="#ffffff"/>
<rect x="1851.38" y="654.4" width="4" height="41.6" fill="#ffffff"/>
<rect x="1862.39" y="661.7" width="4" height="34.3" fill="#ffffff"/>
<line x1="81.5" y1="974.5" x2="86.5" y2="974.5" class="tick"/>
<text x="75.5" y="979.1" class="yl">0</text>
<line x1="86.5" y1="927.7" x2="1866" y2="927.7" class="grid"/>
<line x1="81.5" y1="927.7" x2="86.5" y2="927.7" class="tick"/>
<text x="75.5" y="932.3" class="yl">500k</text>
<line x1="86.5" y1="880.9" x2="1866" y2="880.9" class="grid"/>
<line x1="81.5" y1="880.9" x2="86.5" y2="880.9" class="tick"/>
<text x="75.5" y="885.5" class="yl">1M</text>
<line x1="86.5" y1="834.1" x2="1866" y2="834.1" class="grid"/>
<line x1="81.5" y1="834.1" x2="86.5" y2="834.1" class="tick"/>
<text x="75.5" y="838.7" class="yl">1.5M</text>
<line x1="86.5" y1="787.3" x2="1866" y2="787.3" class="grid"/>
<line x1="81.5" y1="787.3" x2="86.5" y2="787.3" class="tick"/>
<text x="75.5" y="791.9" class="yl">2M</text>
<line x1="86.5" y1="740.5" x2="1866" y2="740.5" class="grid"/>
<line x1="81.5" y1="740.5" x2="86.5" y2="740.5" class="tick"/>
<text x="75.5" y="745.1" class="yl">2.5M</text>
<line x1="142.2" y1="740.5" x2="142.2" y2="974.5" class="grid"/>
<line x1="142.2" y1="974.5" x2="142.2" y2="979" class="xtick"/>
<text x="144.6" y="992.1" class="xl">Mar</text>
<line x1="237.78" y1="740.5" x2="237.78" y2="974.5" class="grid"/>
<line x1="237.78" y1="974.5" x2="237.78" y2="979" class="xtick"/>
<text x="240.18" y="992.1" class="xl">May</text>
<line x1="333.37" y1="740.5" x2="333.37" y2="974.5" class="grid"/>
<line x1="333.37" y1="974.5" x2="333.37" y2="979" class="xtick"/>
<text x="335.77" y="992.1" class="xl">Jul</text>
<line x1="430.52" y1="740.5" x2="430.52" y2="974.5" class="grid"/>
<line x1="430.52" y1="974.5" x2="430.52" y2="979" class="xtick"/>
<text x="432.92" y="992.1" class="xl">Sep</text>
<line x1="526.1" y1="740.5" x2="526.1" y2="974.5" class="grid"/>
<line x1="526.1" y1="974.5" x2="526.1" y2="979" class="xtick"/>
<text x="528.5" y="992.1" class="xl">Nov</text>
<line x1="621.68" y1="740.5" x2="621.68" y2="974.5" class="grid"/>
<line x1="621.68" y1="974.5" x2="621.68" y2="979" class="xtick"/>
<text x="624.08" y="992.1" class="xlb">2021</text>
<line x1="714.13" y1="740.5" x2="714.13" y2="974.5" class="grid"/>
<line x1="714.13" y1="974.5" x2="714.13" y2="979" class="xtick"/>
<text x="716.53" y="992.1" class="xl">Mar</text>
<line x1="809.72" y1="740.5" x2="809.72" y2="974.5" class="grid"/>
<line x1="809.72" y1="974.5" x2="809.72" y2="979" class="xtick"/>
<text x="812.12" y="992.1" class="xl">May</text>
<line x1="905.3" y1="740.5" x2="905.3" y2="974.5" class="grid"/>
<line x1="905.3" y1="974.5" x2="905.3" y2="979" class="xtick"/>
<text x="907.7" y="992.1" class="xl">Jul</text>
<line x1="1002.45" y1="740.5" x2="1002.45" y2="974.5" class="grid"/>
<line x1="1002.45" y1="974.5" x2="1002.45" y2="979" class="xtick"/>
<text x="1004.85" y="992.1" class="xl">Sep</text>
<line x1="1098.03" y1="740.5" x2="1098.03" y2="974.5" class="grid"/>
<line x1="1098.03" y1="974.5" x2="1098.03" y2="979" class="xtick"/>
<text x="1100.43" y="992.1" class="xl">Nov</text>
<line x1="1193.62" y1="740.5" x2="1193.62" y2="974.5" class="grid"/>
<line x1="1193.62" y1="974.5" x2="1193.62" y2="979" class="xtick"/>
<text x="1196.02" y="992.1" class="xlb">2022</text>
<line x1="1286.07" y1="740.5" x2="1286.07" y2="974.5" class="grid"/>
<line x1="1286.07" y1="974.5" x2="1286.07" y2="979" class="xtick"/>
<text x="1288.47" y="992.1" class="xl">Mar</text>
<line x1="1381.65" y1="740.5" x2="1381.65" y2="974.5" class="grid"/>
<line x1="1381.65" y1="974.5" x2="1381.65" y2="979" class="xtick"/>
<text x="1384.05" y="992.1" class="xl">May</text>
<line x1="1477.23" y1="740.5" x2="1477.23" y2="974.5" class="grid"/>
<line x1="1477.23" y1="974.5" x2="1477.23" y2="979" class="xtick"/>
<text x="1479.63" y="992.1" class="xl">Jul</text>
<line x1="1574.38" y1="740.5" x2="1574.38" y2="974.5" class="grid"/>
<line x1="1574.38" y1="974.5" x2="1574.38" y2="979" class="xtick"/>
<text x="1576.78" y="992.1" class="xl">Sep</text>
<line x1="1669.97" y1="740.5" x2="1669.97" y2="974.5" class="grid"/>
<line x1="1669.97" y1="974.5" x2="1669.97" y2="979" class="xtick"/>
<text x="1672.37" y="992.1" class="xl">Nov</text>
<line x1="1765.55" y1="740.5" x2="1765.55" y2="974.5" class="grid"/>
<line x1="1765.55" y1="974.5" x2="1765.55" y2="979" class="xtick"/>
<text x="1767.95" y="992.1" class="xlb">2023</text>
<line x1="1858" y1="740.5" x2="1858" y2="974.5" class="grid"/>
<line x1="1858" y1="974.5" x2="1858" y2="979" class="xtick"/>
<text x="1860.4" y="992.1" class="xl">Mar</text>
<line x1="86.5" y1="740.5" x2="86.5" y2="974.5" class="yaxis"/>
<line x1="81.5" y1="974.5" x2="1866" y2="974.5" class="xaxis"/>
<text transform="translate(43.7 858) rotate(-90)" class="ttl" textLength="138" lengthAdjust="spacingAndGlyphs">Weekly Doses Administered</text>
<rect x="86.36" y="973" width="2" height="3" fill="#44a30f" opacity="0.6"/>
<rect x="97.33" y="973" width="2" height="3" fill="#44a30f" opacity="0.6"/>
<rect x="108.29" y="973" width="2" height="3" fill="#44a30f" opacity="0.6"/>
<rect x="141.2" y="973" width="2" height="3" fill="#44a30f" opacity="0.6"/>
<rect x="152.17" y="973" width="2" height="3" fill="#44a30f" opacity="0.6"/>
<rect x="163.14" y="973" width="2" height="3" fill="#44a30f" opacity="0.6"/>
<rect x="174.11" y="973" width="2" height="3" fill="#44a30f" opacity="0.6"/>
<rect x="185.07" y="973" width="2" height="3" fill="#44a30f" opacity="0.6"/>
<rect x="196.04" y="973" width="2" height="3" fill="#44a30f" opacity="0.6"/>
<rect x="207.01" y="973" width="2" height="3" fill="#44a30f" opacity="0.6"/>
<rect x="217.98" y="973" width="2" height="3" fill="#44a30f" opacity="0.6"/>
<rect x="228.95" y="973" width="2" height="3" fill="#44a30f" opacity="0.6"/>
<rect x="239.92" y="973" width="2" height="3" fill="#44a30f" opacity="0.6"/>
<rect x="250.89" y="973" width="2" height="3" fill="#44a30f" opacity="0.6"/>
<rect x="261.85" y="973" width="2" height="3" fill="#44a30f" opacity="0.6"/>
<rect x="272.82" y="973" width="2" height="3" fill="#44a30f" opacity="0.6"/>
<rect x="283.79" y="973" width="2" height="3" fill="#44a30f" opacity="0.6"/>
<rect x="294.76" y="973" width="2" height="3" fill="#44a30f" opacity="0.6"/>
<rect x="305.73" y="973" width="2" height="3" fill="#44a30f" opacity="0.6"/>
<rect x="316.7" y="973" width="2" height="3" fill="#44a30f" opacity="0.6"/>
<rect x="327.67" y="973" width="2" height="3" fill="#44a30f" opacity="0.6"/>
<rect x="338.63" y="973" width="2" height="3" fill="#44a30f" opacity="0.6"/>
<rect x="349.6" y="973" width="2" height="3" fill="#44a30f" opacity="0.6"/>
<rect x="360.57" y="973" width="2" height="3" fill="#44a30f" opacity="0.6"/>
<rect x="371.54" y="973" width="2" height="3" fill="#44a30f" opacity="0.6"/>
<rect x="382.51" y="973" width="2" height="3" fill="#44a30f" opacity="0.6"/>
<rect x="393.48" y="973" width="2" height="3" fill="#44a30f" opacity="0.6"/>
<rect x="404.45" y="973" width="2" height="3" fill="#44a30f" opacity="0.6"/>
<rect x="415.41" y="973" width="2" height="3" fill="#44a30f" opacity="0.6"/>
<rect x="426.38" y="973" width="2" height="3" fill="#44a30f" opacity="0.6"/>
<rect x="437.35" y="973" width="2" height="3" fill="#44a30f" opacity="0.6"/>
<rect x="448.32" y="973" width="2" height="3" fill="#44a30f" opacity="0.6"/>
<rect x="459.29" y="973" width="2" height="3" fill="#44a30f" opacity="0.6"/>
<rect x="470.26" y="973" width="2" height="3" fill="#44a30f" opacity="0.6"/>
<rect x="481.23" y="973" width="2" height="3" fill="#44a30f" opacity="0.6"/>
<rect x="492.19" y="973" width="2" height="3" fill="#44a30f" opacity="0.6"/>
<rect x="503.16" y="973" width="2" height="3" fill="#44a30f" opacity="0.6"/>
<rect x="514.13" y="973" width="2" height="3" fill="#44a30f" opacity="0.6"/>
<rect x="525.1" y="973" width="2" height="3" fill="#44a30f" opacity="0.6"/>
<rect x="536.07" y="973" width="2" height="3" fill="#44a30f" opacity="0.6"/>
<rect x="547.04" y="973" width="2" height="3" fill="#44a30f" opacity="0.6"/>
<rect x="558.01" y="973" width="2" height="3" fill="#44a30f" opacity="0.6"/>
<rect x="568.97" y="973" width="2" height="3" fill="#44a30f" opacity="0.6"/>
<rect x="579.94" y="973" width="2" height="3" fill="#44a30f" opacity="0.6"/>
<rect x="590.91" y="973" width="2" height="3" fill="#44a30f" opacity="0.6"/>
<rect x="601.88" y="973" width="2" height="3" fill="#44a30f" opacity="0.6"/>
<rect x="612.85" y="973" width="2" height="3" fill="#44a30f" opacity="0.6"/>
<rect x="623.82" y="973" width="2" height="3" fill="#44a30f" opacity="0.6"/>
<rect x="634.79" y="973" width="2" height="3" fill="#44a30f" opacity="0.6"/>
<rect x="645.75" y="973" width="2" height="3" fill="#44a30f" opacity="0.6"/>
<rect x="656.72" y="973" width="2" height="3" fill="#44a30f" opacity="0.6"/>
<rect x="667.69" y="973" width="2" height="3" fill="#44a30f" opacity="0.6"/>
<rect x="678.66" y="973" width="2" height="3" fill="#44a30f" opacity="0.6"/>
<rect x="689.63" y="973" width="2" height="3" fill="#44a30f" opacity="0.6"/>
<rect x="700.6" y="973" width="2" height="3" fill="#44a30f" opacity="0.6"/>
<rect x="710.57" y="969.9" width="4" height="6.1" fill="#44a30f"/>
<rect x="721.53" y="968.3" width="4" height="7.7" fill="#44a30f"/>
<rect x="732.5" y="965.8" width="4" height="10.2" fill="#44a30f"/>
<rect x="743.47" y="963.9" width="4" height="12.1" fill="#44a30f"/>
<rect x="754.44" y="947.5" width="4" height="28.5" fill="#44a30f"/>
<rect x="765.41" y="943" width="4" height="33" fill="#44a30f"/>
<rect x="776.38" y="942.1" width="4" height="33.9" fill="#44a30f"/>
<rect x="787.35" y="942.1" width="4" height="33.9" fill="#44a30f"/>
<rect x="798.32" y="932.4" width="4" height="43.6" fill="#44a30f"/>
<rect x="809.28" y="942.7" width="4" height="33.3" fill="#44a30f"/>
<rect x="820.25" y="934.9" width="4" height="41.1" fill="#44a30f"/>
<rect x="831.22" y="932" width="4" height="44" fill="#44a30f"/>
<rect x="842.19" y="925" width="4" height="51" fill="#44a30f"/>
<rect x="853.16" y="915.2" width="4" height="60.8" fill="#44a30f"/>
<rect x="864.13" y="897.4" width="4" height="78.6" fill="#44a30f"/>
<rect x="875.1" y="896.4" width="4" height="79.6" fill="#44a30f"/>
<rect x="886.06" y="905.5" width="4" height="70.5" fill="#44a30f"/>
<rect x="897.03" y="900.7" width="4" height="75.3" fill="#44a30f"/>
<rect x="908" y="893.5" width="4" height="82.5" fill="#44a30f"/>
<rect x="918.97" y="889" width="4" height="87" fill="#44a30f"/>
<rect x="929.94" y="881.8" width="4" height="94.2" fill="#44a30f"/>
<rect x="940.91" y="871.1" width="4" height="104.9" fill="#44a30f"/>
<rect x="951.88" y="860.4" width="4" height="115.6" fill="#44a30f"/>
<rect x="962.84" y="847.8" width="4" height="128.2" fill="#44a30f"/>
<rect x="973.81" y="827.7" width="4" height="148.3" fill="#44a30f"/>
<rect x="984.78" y="807.9" width="4" height="168.1" fill="#44a30f"/>
<rect x="995.75" y="793.7" width="4" height="182.3" fill="#44a30f"/>
<rect x="1006.72" y="792.7" width="4" height="183.3" fill="#44a30f"/>
<rect x="1017.69" y="803.6" width="4" height="172.4" fill="#44a30f"/>
<rect x="1028.66" y="790.8" width="4" height="185.2" fill="#44a30f"/>
<rect x="1039.62" y="781.7" width="4" height="194.3" fill="#44a30f"/>
<rect x="1050.59" y="789.1" width="4" height="186.9" fill="#44a30f"/>
<rect x="1061.56" y="794.3" width="4" height="181.7" fill="#44a30f"/>
<rect x="1072.53" y="790.8" width="4" height="185.2" fill="#44a30f"/>
<rect x="1083.5" y="811.4" width="4" height="164.6" fill="#44a30f"/>
<rect x="1094.47" y="843.9" width="4" height="132.1" fill="#44a30f"/>
<rect x="1105.44" y="862" width="4" height="114" fill="#44a30f"/>
<rect x="1116.4" y="885.7" width="4" height="90.3" fill="#44a30f"/>
<rect x="1127.37" y="898.7" width="4" height="77.3" fill="#44a30f"/>
<rect x="1138.34" y="912.9" width="4" height="63.1" fill="#44a30f"/>
<rect x="1149.31" y="920.7" width="4" height="55.3" fill="#44a30f"/>
<rect x="1160.28" y="923.6" width="4" height="52.4" fill="#44a30f"/>
<rect x="1171.25" y="876.9" width="4" height="99.1" fill="#44a30f"/>
<rect x="1182.22" y="890.9" width="4" height="85.1" fill="#44a30f"/>
<rect x="1193.18" y="924.6" width="4" height="51.4" fill="#44a30f"/>
<rect x="1204.15" y="841.9" width="4" height="134.1" fill="#44a30f"/>
<rect x="1215.12" y="792" width="4" height="184" fill="#44a30f"/>
<rect x="1226.09" y="788.5" width="4" height="187.5" fill="#44a30f"/>
<rect x="1237.06" y="820.9" width="4" height="155.1" fill="#44a30f"/>
<rect x="1248.03" y="831.8" width="4" height="144.2" fill="#44a30f"/>
<rect x="1259" y="858.1" width="4" height="117.9" fill="#44a30f"/>
<rect x="1269.96" y="886.3" width="4" height="89.7" fill="#44a30f"/>
<rect x="1280.93" y="902.8" width="4" height="73.2" fill="#44a30f"/>
<rect x="1291.9" y="923" width="4" height="53" fill="#44a30f"/>
<rect x="1302.87" y="922" width="4" height="54" fill="#44a30f"/>
<rect x="1313.84" y="921.1" width="4" height="54.9" fill="#44a30f"/>
<rect x="1324.81" y="925.9" width="4" height="50.1" fill="#44a30f"/>
<rect x="1335.78" y="936.8" width="4" height="39.2" fill="#44a30f"/>
<rect x="1346.74" y="946.9" width="4" height="29.1" fill="#44a30f"/>
<rect x="1357.71" y="939.8" width="4" height="36.2" fill="#44a30f"/>
<rect x="1368.68" y="951.5" width="4" height="24.5" fill="#44a30f"/>
<rect x="1379.65" y="949" width="4" height="27" fill="#44a30f"/>
<rect x="1390.62" y="948.1" width="4" height="27.9" fill="#44a30f"/>
<rect x="1401.59" y="945.25" width="4" height="30.75" fill="#44a30f"/>
<rect x="1412.56" y="940.9" width="4" height="35.1" fill="#44a30f"/>
<rect x="1423.52" y="917.9" width="4" height="58.1" fill="#44a30f"/>
<rect x="1434.49" y="943.4" width="4" height="32.6" fill="#44a30f"/>
<rect x="1445.46" y="948.1" width="4" height="27.9" fill="#44a30f"/>
<rect x="1456.43" y="950.4" width="4" height="25.6" fill="#44a30f"/>
<rect x="1467.4" y="951.5" width="4" height="24.5" fill="#44a30f"/>
<rect x="1478.37" y="955" width="4" height="21" fill="#44a30f"/>
<rect x="1489.34" y="950.4" width="4" height="25.6" fill="#44a30f"/>
<rect x="1500.3" y="914.6" width="4" height="61.4" fill="#44a30f"/>
<rect x="1511.27" y="917.1" width="4" height="58.9" fill="#44a30f"/>
<rect x="1522.24" y="930" width="4" height="46" fill="#44a30f"/>
<rect x="1533.21" y="950.4" width="4" height="25.6" fill="#44a30f"/>
<rect x="1544.18" y="951.5" width="4" height="24.5" fill="#44a30f"/>
<rect x="1555.15" y="956.9" width="4" height="19.1" fill="#44a30f"/>
<rect x="1566.12" y="961.25" width="4" height="14.75" fill="#44a30f"/>
<rect x="1578.08" y="973" width="2" height="3" fill="#44a30f" opacity="0.6"/>
<rect x="1589.05" y="973" width="2" height="3" fill="#44a30f" opacity="0.6"/>
<rect x="1600.02" y="973" width="2" height="3" fill="#44a30f" opacity="0.6"/>
<rect x="1610.99" y="973" width="2" height="3" fill="#44a30f" opacity="0.6"/>
<rect x="1621.96" y="973" width="2" height="3" fill="#44a30f" opacity="0.6"/>
<rect x="1632.93" y="973" width="2" height="3" fill="#44a30f" opacity="0.6"/>
<rect x="1643.9" y="973" width="2" height="3" fill="#44a30f" opacity="0.6"/>
<rect x="1654.86" y="973" width="2" height="3" fill="#44a30f" opacity="0.6"/>
<rect x="1665.83" y="973" width="2" height="3" fill="#44a30f" opacity="0.6"/>
<rect x="1675.8" y="956.9" width="4" height="19.1" fill="#44a30f"/>
<rect x="1686.77" y="967.75" width="4" height="8.25" fill="#44a30f"/>
<rect x="1697.74" y="964" width="4" height="12" fill="#44a30f"/>
<rect x="1708.71" y="966" width="4" height="10" fill="#44a30f"/>
<rect x="1719.68" y="967.75" width="4" height="8.25" fill="#44a30f"/>
<rect x="1730.64" y="968.75" width="4" height="7.25" fill="#44a30f"/>
<rect x="1741.61" y="969.75" width="4" height="6.25" fill="#44a30f"/>
<rect x="1752.58" y="969.75" width="4" height="6.25" fill="#44a30f"/>
<rect x="1774.52" y="970.25" width="4" height="5.75" fill="#44a30f"/>
<rect x="1785.49" y="971" width="4" height="5" fill="#44a30f"/>
<rect x="1796.46" y="971" width="4" height="5" fill="#44a30f"/>
<rect x="1807.42" y="971.9" width="4" height="4.1" fill="#44a30f"/>
<rect x="1818.39" y="971.9" width="4" height="4.1" fill="#44a30f"/>
<rect x="1830.36" y="973" width="2" height="3" fill="#44a30f" opacity="0.6"/>
<rect x="1841.33" y="973" width="2" height="3" fill="#44a30f" opacity="0.6"/>
<rect x="1852.3" y="973" width="2" height="3" fill="#44a30f" opacity="0.6"/>
<rect x="1863.27" y="973" width="2" height="3" fill="#44a30f" opacity="0.6"/>
<!-- fullscreen icon -->
<circle cx="1893.7" cy="146.9" r="7.6" fill="#2b2b2b" stroke="#8a8a8a" stroke-width="1"/>
<g stroke="#a0a0a0" stroke-width="1" fill="none">
<path d="M1890 143.2 L1892.4 145.6 M1892.4 143.8 L1892.4 145.6 L1890.6 145.6"/>
<path d="M1897.4 143.2 L1895 145.6 M1895 143.8 L1895 145.6 L1896.8 145.6"/>
<path d="M1890 150.6 L1892.4 148.2 M1892.4 150 L1892.4 148.2 L1890.6 148.2"/>
<path d="M1897.4 150.6 L1895 148.2 M1895 150 L1895 148.2 L1896.8 148.2"/>
</g>
<!-- tabs text -->
<text x="36.8" y="1022.1" font-family="Liberation Sans" font-size="13" fill="#f0f0f0" textLength="42.8" lengthAdjust="spacingAndGlyphs">Weekly</text>
<text x="116.6" y="1022.1" font-family="Liberation Sans" font-size="13" fill="#f0f0f0" textLength="42" lengthAdjust="spacingAndGlyphs">28-Day</text>
<!-- scrollbar arrows -->
<path d="M1907.5 12 L1911.5 8 L1915.5 12 Z" fill="#505050"/>
<path d="M1907.5 1068 L1911.5 1072 L1915.5 1068 Z" fill="#505050"/>
</svg>
</body></html>
